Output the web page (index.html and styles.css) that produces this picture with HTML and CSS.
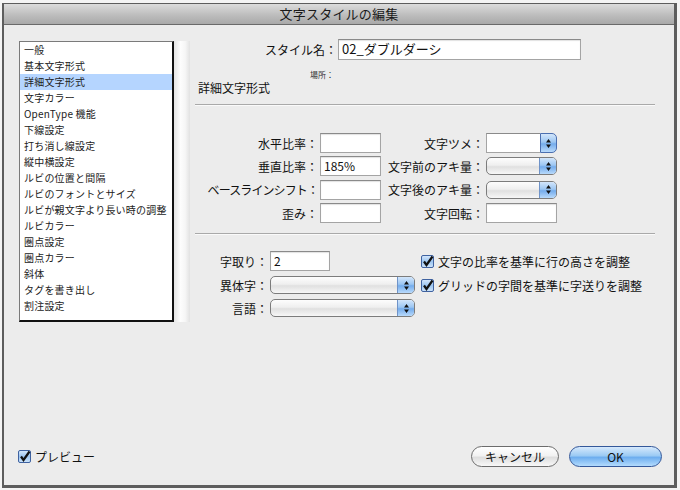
FILE: index.html
```html
<!DOCTYPE html>
<html lang="ja">
<head>
<meta charset="utf-8">
<title>文字スタイルの編集</title>
<link rel="stylesheet" href="styles.css">
</head>
<body>
<div class="window">
  <div class="titlebar">文字スタイルの編集</div>
  <div class="main">
    <div class="sidebar">
      <ul class="list">
        <li>一般</li>
        <li>基本文字形式</li>
        <li class="sel">詳細文字形式</li>
        <li>文字カラー</li>
        <li>OpenType 機能</li>
        <li>下線設定</li>
        <li>打ち消し線設定</li>
        <li>縦中横設定</li>
        <li>ルビの位置と間隔</li>
        <li>ルビのフォントとサイズ</li>
        <li>ルビが親文字より長い時の調整</li>
        <li>ルビカラー</li>
        <li>圏点設定</li>
        <li>圏点カラー</li>
        <li>斜体</li>
        <li>タグを書き出し</li>
        <li>割注設定</li>
      </ul>
      <div class="track"></div>
    </div>
    <div class="panel">
      <div class="name-row">
        <span class="name-lbl">スタイル名：</span>
        <div class="field name-field">02_ダブルダーシ</div>
      </div>
      <div class="loc-row"><span class="loc">場所：</span></div>
      <div class="section-title">詳細文字形式</div>
      <div class="sep"></div>
      <div class="grid">
        <span class="lbl">水平比率：</span>
        <div class="field"></div>
        <span class="lbl">文字ツメ：</span>
        <div class="combo"><div class="combo-field"></div><div class="stepper"><svg width="7" height="11" viewBox="0 0 7 11"><path d="M3.5 1 L6 4.5 H1 Z M3.5 10 L6 6.5 H1 Z" fill="#111"/></svg></div></div>

        <span class="lbl">垂直比率：</span>
        <div class="field">185%</div>
        <span class="lbl">文字前のアキ量：</span>
        <div class="popup"><div class="arrows"><svg width="7" height="11" viewBox="0 0 7 11"><path d="M3.5 1 L6 4.5 H1 Z M3.5 10 L6 6.5 H1 Z" fill="#111"/></svg></div></div>

        <span class="lbl tight">ベースラインシフト：</span>
        <div class="field"></div>
        <span class="lbl">文字後のアキ量：</span>
        <div class="popup"><div class="arrows"><svg width="7" height="11" viewBox="0 0 7 11"><path d="M3.5 1 L6 4.5 H1 Z M3.5 10 L6 6.5 H1 Z" fill="#111"/></svg></div></div>

        <span class="lbl">歪み：</span>
        <div class="field"></div>
        <span class="lbl">文字回転：</span>
        <div class="field"></div>
      </div>
      <div class="sep sep2"></div>
      <div class="lower">
        <span class="lbl">字取り：</span>
        <div class="field short">2</div>
        <span></span>
        <label class="check"><svg class="cb" width="13" height="13" viewBox="0 0 13 13"><defs><linearGradient id="g1" x1="0" y1="0" x2="0" y2="1"><stop offset="0" stop-color="#d7e8fb"/><stop offset="0.5" stop-color="#9cc5f1"/><stop offset="1" stop-color="#cfe5fb"/></linearGradient></defs><rect x="0.5" y="0.5" width="12" height="12" rx="1.5" fill="url(#g1)" stroke="#3f62a0"/><path d="M3 6.5 L5.5 10 L11.5 1.5" fill="none" stroke="#111" stroke-width="2.2"/></svg><span>文字の比率を基準に行の高さを調整</span></label>

        <span class="lbl">異体字：</span>
        <div class="popup"><div class="arrows"><svg width="7" height="11" viewBox="0 0 7 11"><path d="M3.5 1 L6 4.5 H1 Z M3.5 10 L6 6.5 H1 Z" fill="#111"/></svg></div></div>
        <span></span>
        <label class="check"><svg class="cb" width="13" height="13" viewBox="0 0 13 13"><defs><linearGradient id="g2" x1="0" y1="0" x2="0" y2="1"><stop offset="0" stop-color="#d7e8fb"/><stop offset="0.5" stop-color="#9cc5f1"/><stop offset="1" stop-color="#cfe5fb"/></linearGradient></defs><rect x="0.5" y="0.5" width="12" height="12" rx="1.5" fill="url(#g2)" stroke="#3f62a0"/><path d="M3 6.5 L5.5 10 L11.5 1.5" fill="none" stroke="#111" stroke-width="2.2"/></svg><span>グリッドの字間を基準に字送りを調整</span></label>

        <span class="lbl">言語：</span>
        <div class="popup"><div class="arrows"><svg width="7" height="11" viewBox="0 0 7 11"><path d="M3.5 1 L6 4.5 H1 Z M3.5 10 L6 6.5 H1 Z" fill="#111"/></svg></div></div>
      </div>
    </div>
  </div>
  <div class="footer">
    <label class="check preview"><svg class="cb" width="13" height="13" viewBox="0 0 13 13"><defs><linearGradient id="g3" x1="0" y1="0" x2="0" y2="1"><stop offset="0" stop-color="#d7e8fb"/><stop offset="0.5" stop-color="#9cc5f1"/><stop offset="1" stop-color="#cfe5fb"/></linearGradient></defs><rect x="0.5" y="0.5" width="12" height="12" rx="1.5" fill="url(#g3)" stroke="#3f62a0"/><path d="M3 6.5 L5.5 10 L11.5 1.5" fill="none" stroke="#111" stroke-width="2.2"/></svg><span>プレビュー</span></label>
    <div class="buttons">
      <div class="btn cancel">キャンセル</div>
      <div class="btn ok">OK</div>
    </div>
  </div>
</div>
</body>
</html>
```

FILE: styles.css
```css
* { box-sizing: border-box; }
html, body { margin: 0; padding: 0; }
body {
  background: #f4f4f4;
  font-family: "Noto Sans CJK JP", "Noto Sans", sans-serif;
  color: #111;
  width: 680px;
  height: 490px;
  overflow: hidden;
}
.window {
  margin: 3px 0 0 2px;
  width: 675px;
  height: 485px;
  border: 3px solid #5d5d5d;
  border-left-width: 2px;
  border-top-width: 1px;
  background: #ececec;
  display: flex;
  flex-direction: column;
}
.titlebar {
  height: 21px;
  flex: none;
  background: linear-gradient(#dcdcdc, #bdbdbd 55%, #a9a9a9);
  border-bottom: 1px solid #6a6a6a;
  text-align: center;
  font-size: 13px;
  line-height: 20px;
  color: #1a1a1a;
  letter-spacing: 0.2px;
}
.main {
  flex: 1;
  display: flex;
  gap: 5px;
  padding: 16px 0 0 15px;
}
.sidebar {
  display: flex;
  height: 281px;
}
.list {
  list-style: none;
  margin: 0;
  padding: 0;
  width: 155px;
  height: 281px;
  background: #fff;
  border: 1px solid #7a7a7a;
  border-right: 2px solid #111;
  border-bottom: 2px solid #111;
  font-size: 10px;
  color: #222;
}
.list li {
  height: 16px;
  line-height: 16px;
  padding-left: 4px;
  white-space: nowrap;
  letter-spacing: 0.2px;
}
.list li.sel { background: #b5d5ff; }
.track {
  width: 16px;
  height: 281px;
  background: linear-gradient(90deg, #e4e4e4, #fdfdfd 40%, #f6f6f6 70%, #e2e2e2);
}
.panel {
  width: 462px;
  display: flex;
  flex-direction: column;
}
.name-row {
  display: flex;
  align-items: center;
  margin-top: -2px;
  height: 21px;
}
.name-lbl {
  width: 142px;
  text-align: right;
  font-size: 12px;
}
.field {
  height: 20px;
  background: #fff;
  border: 1px solid #a4a4a4;
  border-top-color: #8a8a8a;
  box-shadow: inset 0 1px 1px rgba(0,0,0,0.12);
  font-size: 12px;
  line-height: 18px;
  padding-left: 3px;
}
.name-field {
  width: 243px;
  height: 21px;
  margin-left: 1px;
  font-size: 13px;
}
.loc-row {
  margin-top: 5px;
  width: 139px;
  text-align: right;
  height: 12px;
  line-height: 12px;
}
.loc { font-size: 8px; color: #333; }
.section-title {
  margin-top: 3px;
  padding-left: 3px;
  font-size: 12px;
  line-height: 16px;
  height: 16px;
}
.sep {
  margin-top: 8px;
  width: 460px;
  height: 2px;
  border-top: 1px solid #a9a9a9;
  border-bottom: 1px solid #fafafa;
}
.grid {
  margin-top: 27px;
  display: grid;
  grid-template-columns: 125px 61px 105px 71px;
  grid-auto-rows: 20px;
  row-gap: 3.4px;
  align-items: center;
}
.lbl {
  font-size: 12px;
  text-align: right;
  padding-right: 2px;
  white-space: nowrap;
  color: #111;
}
.lbl.tight { letter-spacing: -0.9px; }
.combo {
  display: flex;
  height: 20px;
}
.combo-field {
  flex: 1;
  background: #fff;
  border: 1px solid #a4a4a4;
  border-top-color: #8a8a8a;
  border-right: none;
}
.stepper {
  width: 17px;
  border: 1px solid #4b6fb0;
  border-radius: 0 5px 5px 0;
  background: linear-gradient(#d3e6fb, #9cc6f2 45%, #74acec 55%, #b9dafb);
  display: flex;
  align-items: center;
  justify-content: center;
}
.popup {
  height: 18px;
  border: 1px solid #7c7c7c;
  border-radius: 5px;
  background: linear-gradient(#fdfdfd, #efefef 45%, #e0e0e0 55%, #f7f7f7);
  display: flex;
  justify-content: flex-end;
  overflow: hidden;
}
.arrows {
  width: 17px;
  border-left: 1px solid #6f93c8;
  background: linear-gradient(#d3e6fb, #9cc6f2 45%, #74acec 55%, #b9dafb);
  display: flex;
  align-items: center;
  justify-content: center;
}
.sep2 { margin-top: 10px; }
.lower {
  margin-top: 16px;
  display: grid;
  grid-template-columns: 75px 145px 6px auto;
  grid-template-rows: 20px 18px 18px;
  row-gap: 5px;
  align-items: center;
}
.field.short { width: 60px; }
.check {
  display: flex;
  align-items: center;
  gap: 4px;
  font-size: 12px;
  white-space: nowrap;
}
.cb { flex: none; }
.footer {
  flex: none;
  height: 21px;
  margin: 0 12px 18px 14px;
  display: flex;
  align-items: center;
  justify-content: space-between;
}
.preview span { font-size: 12px; }
.buttons {
  display: flex;
  gap: 10px;
}
.btn {
  height: 21px;
  border-radius: 11px;
  font-size: 12px;
  line-height: 19px;
  text-align: center;
}
.cancel {
  width: 88px;
  border: 1px solid #6c6c6c;
  background: linear-gradient(#ffffff, #f2f2f2 45%, #dedede 55%, #f8f8f8);
}
.ok {
  width: 93px;
  border: 1px solid #34589a;
  background: linear-gradient(#d6e9fc, #9ccbf4 45%, #6eaeef 55%, #b3dbfd);
}
```
